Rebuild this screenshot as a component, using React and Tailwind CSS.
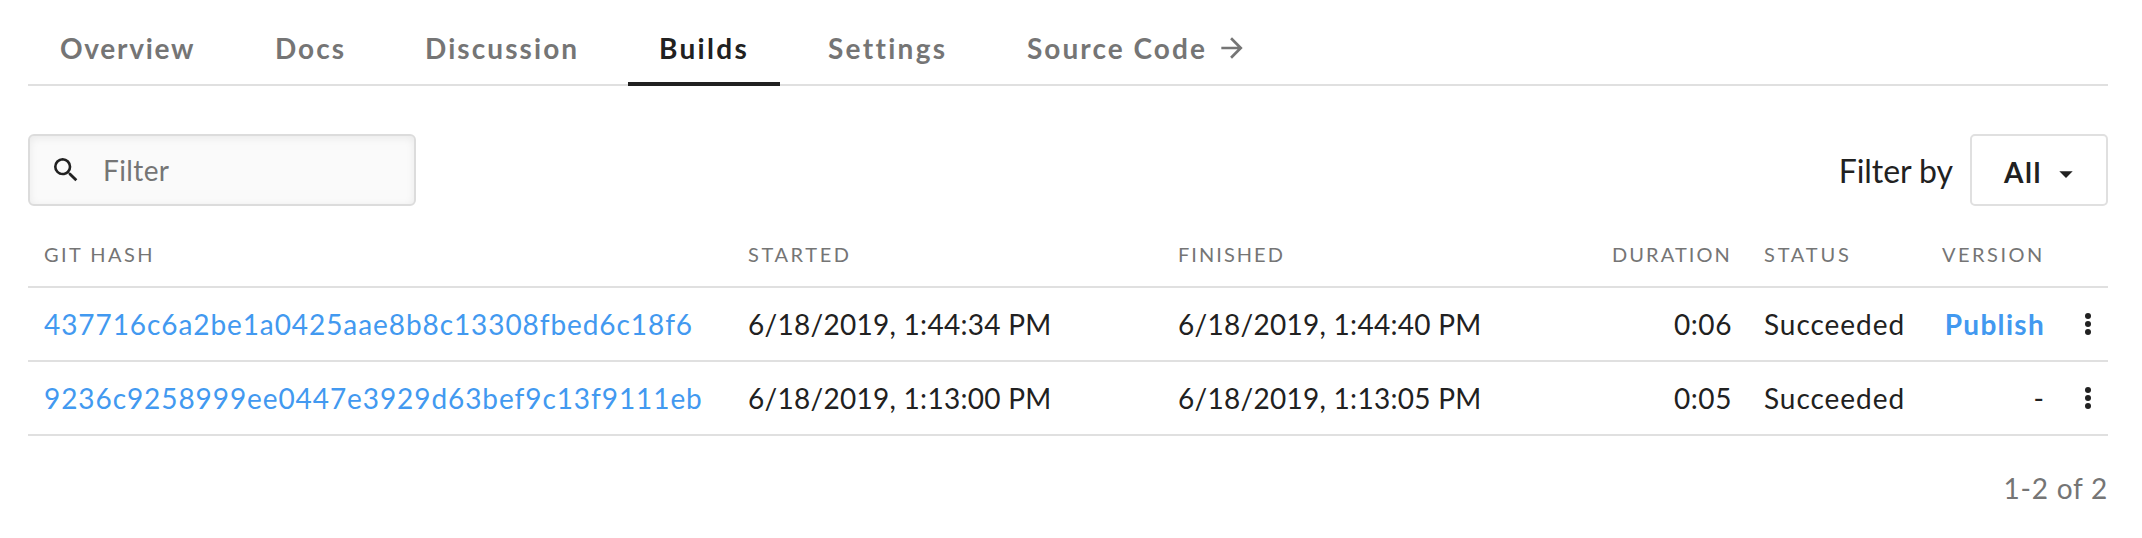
import { MdArrowDropDown, MdArrowForward, MdSearch } from 'react-icons/md';

const tabs = [
  { label: 'Overview', style: 'w-[199px] tracking-[1.72px]' },
  { label: 'Docs', style: 'w-[134px] tracking-[2px]' },
  { label: 'Discussion', style: 'w-[219px] tracking-[2.08px]' },
  { label: 'Builds', style: 'w-[152px] pl-[31px] tracking-[2.3px]', active: true },
  { label: 'Settings', style: 'w-[183px] tracking-[2.3px]' },
  { label: 'Source Code', style: 'tracking-[2.05px]', external: true },
];

const columns = [
  { label: 'Git hash', style: 'tracking-[2.44px]' },
  { label: 'Started', style: 'tracking-[2.6px]' },
  { label: 'Finished', style: 'tracking-[2.03px]' },
  { label: 'Duration', style: 'text-right tracking-[2.1px]' },
  { label: 'Status', style: 'tracking-[2.8px]' },
  { label: 'Version', style: 'pr-[17px] text-right tracking-[2.5px]' },
];

const builds = [
  {
    hash: '437716c6a2be1a0425aae8b8c13308fbed6c18f6',
    started: '6/18/2019, 1:44:34 PM',
    finished: '6/18/2019, 1:44:40 PM',
    duration: '0:06',
    status: 'Succeeded',
  },
  {
    hash: '9236c9258999ee0447e3929d63bef9c13f9111eb',
    started: '6/18/2019, 1:13:00 PM',
    finished: '6/18/2019, 1:13:05 PM',
    duration: '0:05',
    status: 'Succeeded',
    version: '-',
  },
];

const gridCols = 'grid grid-cols-[704px_430px_404px_182px_178px_134px_48px] items-center border-b-2 border-[#e0e0e0]';

function Tab({ label, style, active, external }) {
  return (
    <a className={`relative flex h-full items-center px-8 pt-[11px] font-bold ${style} ${active ? 'text-[#212121]' : 'text-[#757575]'}`}>
      {label}
      {external && <MdArrowForward className="ml-[9px] size-8" />}
      {active && <span className="absolute inset-x-0 -bottom-0.5 h-1 bg-[#212121]" />}
    </a>
  );
}

function MoreIcon() {
  return (
    <svg viewBox="0 0 32 32" fill="currentColor" className="ml-3 size-8">
      <circle cx="16" cy="8" r="3" />
      <circle cx="16" cy="16" r="3" />
      <circle cx="16" cy="24" r="3" />
    </svg>
  );
}

export default function App() {
  return (
    <div className="h-[538px] bg-white px-7 pr-[34px] font-['Lato','Open_Sans',sans-serif] text-[28px] leading-9 whitespace-nowrap text-[#212121]">
      <nav className="flex h-[86px] gap-4 border-b-2 border-[#e0e0e0]">
        {tabs.map((tab) => (
          <Tab key={tab.label} {...tab} />
        ))}
      </nav>

      <div className="mt-12 flex h-[72px] items-center justify-between">
        <label className="flex h-full w-[388px] items-center rounded-md border-2 border-[#dcdcdc] bg-[#fafafa] pl-5 shadow-[inset_0_2px_8px_rgba(0,0,0,0.07)]">
          <MdSearch className="size-8" />
          <input
            placeholder="Filter"
            className="ml-[21px] w-64 bg-transparent tracking-[0.4px] outline-none placeholder:text-[#757575]"
          />
        </label>
        <div className="flex h-full items-center">
          <span className="mr-[17px] pt-0.5 text-[32px] tracking-[-0.05px]">Filter by</span>
          <button className="flex h-full w-[138px] items-center rounded-[5px] border-2 border-[#e0e0e0] pt-1 pl-8 font-bold">
            <span className="w-[46px] text-left tracking-[1.6px]">All</span>
            <MdArrowDropDown className="mt-1 size-8" />
          </button>
        </div>
      </div>

      <section>
        <div className={`${gridCols} h-[82px] pt-4 text-xl text-[#757575] uppercase`}>
          {columns.map(({ label, style }) => (
            <span key={label} className={`px-4 ${style}`}>{label}</span>
          ))}
        </div>
        {builds.map((build) => (
          <div key={build.hash} className={`${gridCols} h-[74px]`}>
            <a className="px-4 tracking-[0.92px] text-[#4299f0]">{build.hash}</a>
            <span className="px-4 tracking-[0.28px]">{build.started}</span>
            <span className="px-4 tracking-[0.28px]">{build.finished}</span>
            <span className="px-4 text-right tracking-[0.6px]">{build.duration}</span>
            <span className="px-4 tracking-[0.96px]">{build.status}</span>
            {build.version ? (
              <span className="px-4 text-right">{build.version}</span>
            ) : (
              <a className="pr-[15px] text-right font-bold tracking-[1.3px] text-[#4299f0]">Publish</a>
            )}
            <MoreIcon />
          </div>
        ))}
      </section>

      <p className="mt-[34px] text-right tracking-[0.77px] text-[#757575]">1-2 of 2</p>
    </div>
  );
}
